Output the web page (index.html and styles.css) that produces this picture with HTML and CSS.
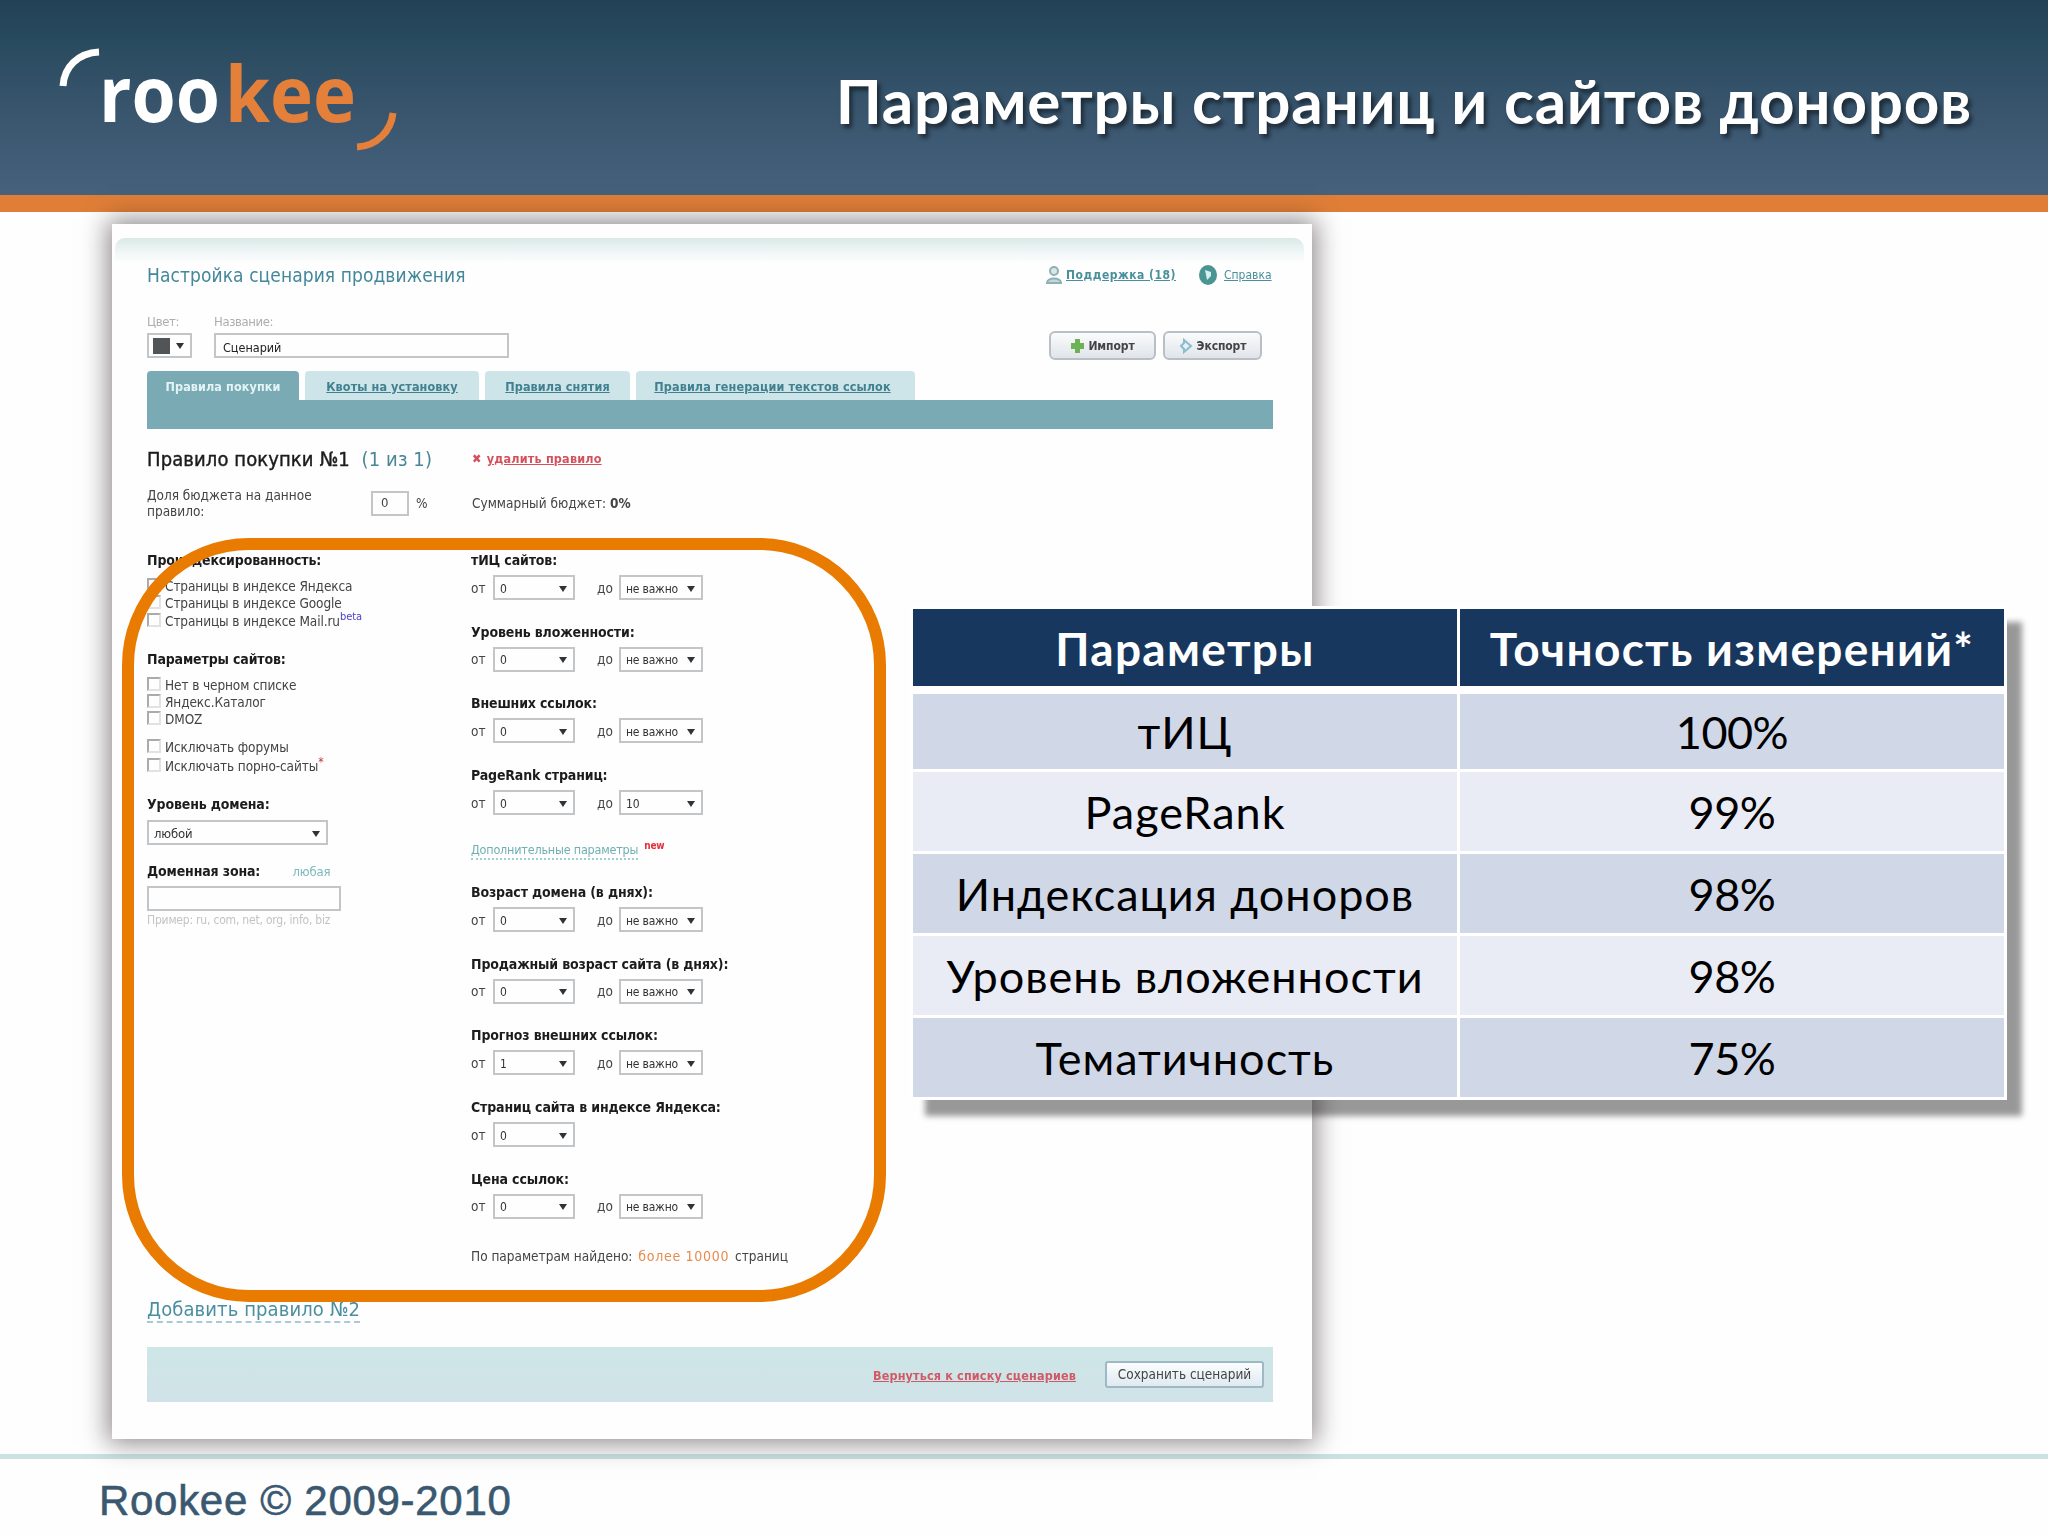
FILE: index.html
```
<!doctype html>
<html lang="ru">
  <head>
    <meta charset="UTF-8" />
    <title>Параметры страниц и сайтов доноров</title>
    <link rel="stylesheet" href="styles.css">
  </head>
  <body>
    <div class="slide">
      <header class="header">
        <svg class="logo" width="350" height="120" viewBox="0 0 350 120">
          <path d="M6 51 C7 32 21 18 42 17" fill="none" stroke="#fff" stroke-width="7" />
          <text class="logo-text" x="42" y="87" textLength="121" lengthAdjust="spacingAndGlyphs" fill="#fff">roo</text>
          <text class="logo-text" x="168" y="87" textLength="131" lengthAdjust="spacingAndGlyphs" fill="#e5803a">kee</text>
          <path d="M336 78 C334 96 320 111 300 112" fill="none" stroke="#e5803a" stroke-width="7" />
        </svg>
        <h1>Параметры страниц и сайтов доноров</h1>
      </header>

      <main class="main">
        <div class="panel">
          <div class="panel-content">
            <div class="glow"></div>
            <div class="panel-head">
              <h2>Настройка сценария продвижения</h2>
              <div class="help-links">
                <svg width="16" height="20" viewBox="0 0 16 20">
                  <circle cx="8" cy="6" r="4" fill="#d9e6e8" stroke="#8fb0b5" stroke-width="2" />
                  <path d="M1 18 C1 12 15 12 15 18 Z" fill="#c4d8da" stroke="#8fb0b5" stroke-width="2" />
                </svg>
                <a class="support">Поддержка (18)</a>
                <svg width="18" height="20" viewBox="0 0 18 20">
                  <ellipse cx="9" cy="10" rx="9" ry="10" fill="#4a9494" />
                  <path d="M6 5 L12 7 L12 11 L8 15 Z" fill="#d5eeee" />
                </svg>
                <a class="help">Справка</a>
              </div>
            </div>

            <div class="scenario">
              <div class="field field-color">
                <label>Цвет:</label>
                <div class="box color-box"><span class="swatch"></span><span class="arrow"></span></div>
              </div>
              <div class="field field-name">
                <label>Название:</label>
                <div class="box name-box">Сценарий</div>
              </div>
              <div class="btn btn-import">
                <svg width="14" height="16" viewBox="0 0 14 16">
                  <path d="M5 1 H10 V5 H14 V11 H10 V15 H5 V11 H1 V5 H5 Z" fill="#6db356" />
                </svg>
                Импорт
              </div>
              <div class="btn btn-export">
                <svg width="14" height="16" viewBox="0 0 14 16">
                  <path d="M5 2 L12 8 L5 14 V11 L2 8 L5 5 Z" fill="#e3f2f8" stroke="#8bbccb" stroke-width="2" />
                </svg>
                Экспорт
              </div>
            </div>

            <div class="tabs">
              <div class="tab tab-active">Правила покупки</div>
              <div class="tab tab-quota"><a>Квоты на установку</a></div>
              <div class="tab tab-removal"><a>Правила снятия</a></div>
              <div class="tab tab-texts"><a>Правила генерации текстов ссылок</a></div>
            </div>
            <div class="tabs-bar"></div>

            <div class="rule-head">
              <div class="rule-title">Правило покупки №1 <span>(1 из 1)</span></div>
              <div class="rule-delete"><b>✖</b><a>удалить правило</a></div>
            </div>

            <div class="budget">
              <div class="budget-share">Доля бюджета на данное правило:</div>
              <div class="box budget-box">0</div>
              <div class="percent">%</div>
              <div>Суммарный бюджет: <b>0%</b></div>
            </div>

            <div class="filters">
              <div class="col-left">
                <h3>Проиндексированность:</h3>
                <div class="checks">
                  <div class="check"><i></i>Страницы в индексе Яндекса</div>
                  <div class="check"><i></i>Страницы в индексе Google</div>
                  <div class="check check-gap"><i></i>Страницы в индексе Mail.ru<sup class="beta">beta</sup></div>
                </div>
                <h3>Параметры сайтов:</h3>
                <div class="checks checks-sites">
                  <div class="check"><i></i>Нет в черном списке</div>
                  <div class="check"><i></i>Яндекс.Каталог</div>
                  <div class="check"><i></i>DMOZ</div>
                </div>
                <div class="checks checks-exclude">
                  <div class="check"><i></i>Исключать форумы</div>
                  <div class="check"><i></i>Исключать порно-сайты<sup class="star">*</sup></div>
                </div>
                <h3>Уровень домена:</h3>
                <div class="box select select-level">любой<span class="arrow"></span></div>
                <h3 class="zone-title">Доменная зона: <a>любая</a></h3>
                <div class="box zone-box"></div>
                <div class="hint">Пример: ru, com, net, org, info, biz</div>
              </div>

              <div class="col-right">
                <div class="groups">
                  <div class="group">
                    <h3>тИЦ сайтов:</h3>
                    <div class="range">от <div class="box select">0<span class="arrow"></span></div> <span class="to">до</span> <div class="box select">не важно<span class="arrow"></span></div></div>
                  </div>
                  <div class="group">
                    <h3>Уровень вложенности:</h3>
                    <div class="range">от <div class="box select">0<span class="arrow"></span></div> <span class="to">до</span> <div class="box select">не важно<span class="arrow"></span></div></div>
                  </div>
                  <div class="group">
                    <h3>Внешних ссылок:</h3>
                    <div class="range">от <div class="box select">0<span class="arrow"></span></div> <span class="to">до</span> <div class="box select">не важно<span class="arrow"></span></div></div>
                  </div>
                  <div class="group">
                    <h3>PageRank страниц:</h3>
                    <div class="range">от <div class="box select">0<span class="arrow"></span></div> <span class="to">до</span> <div class="box select">10<span class="arrow"></span></div></div>
                  </div>
                </div>
                <div class="more"><a>Дополнительные параметры</a><sup>new</sup></div>
                <div class="groups">
                  <div class="group">
                    <h3>Возраст домена (в днях):</h3>
                    <div class="range">от <div class="box select">0<span class="arrow"></span></div> <span class="to">до</span> <div class="box select">не важно<span class="arrow"></span></div></div>
                  </div>
                  <div class="group">
                    <h3>Продажный возраст сайта (в днях):</h3>
                    <div class="range">от <div class="box select">0<span class="arrow"></span></div> <span class="to">до</span> <div class="box select">не важно<span class="arrow"></span></div></div>
                  </div>
                  <div class="group">
                    <h3>Прогноз внешних ссылок:</h3>
                    <div class="range">от <div class="box select">1<span class="arrow"></span></div> <span class="to">до</span> <div class="box select">не важно<span class="arrow"></span></div></div>
                  </div>
                  <div class="group">
                    <h3>Страниц сайта в индексе Яндекса:</h3>
                    <div class="range">от <div class="box select">0<span class="arrow"></span></div></div>
                  </div>
                  <div class="group">
                    <h3>Цена ссылок:</h3>
                    <div class="range">от <div class="box select">0<span class="arrow"></span></div> <span class="to">до</span> <div class="box select">не важно<span class="arrow"></span></div></div>
                  </div>
                </div>
                <div class="found">По параметрам найдено: <b>более 10000</b> страниц</div>
              </div>
            </div>

            <div class="add-rule"><a>Добавить правило №2</a></div>

            <div class="actions">
              <a>Вернуться к списку сценариев</a>
              <div class="btn-save">Сохранить сценарий</div>
            </div>
          </div>
        </div>

        <!-- highlight over the filters -->
        <div class="frame"></div>

        <table class="accuracy">
          <thead>
            <tr><th>Параметры</th><th>Точность измерений*</th></tr>
          </thead>
          <tbody>
            <tr><td>тИЦ</td><td class="num">100%</td></tr>
            <tr><td>PageRank</td><td class="num">99%</td></tr>
            <tr><td>Индексация доноров</td><td class="num">98%</td></tr>
            <tr><td>Уровень вложенности</td><td class="num">98%</td></tr>
            <tr><td>Тематичность</td><td class="num">75%</td></tr>
          </tbody>
        </table>
      </main>

      <footer class="footer">Rookee © 2009-2010</footer>
    </div>
  </body>
</html>
```
FILE: styles.css
```
* {
  box-sizing: border-box;
}
body {
  margin: 0;
  background: #fefefe;
  font-family: "DejaVu Sans Condensed", "DejaVu Sans", sans-serif;
}
h1,
h2,
h3 {
  margin: 0;
}
.slide {
  width: 2048px;
  height: 1536px;
  display: flex;
  flex-direction: column;
  overflow: hidden;
}

/* header */
.header {
  height: 212px;
  padding: 35px 76px 0 57px;
  display: flex;
  justify-content: space-between;
  align-items: flex-start;
  background: linear-gradient(#234156 0, #284a5e 20%, #3a566f 60%, #46617c 100%);
  border-bottom: 17px solid #e07e38;
}
.logo {
  flex: none;
}
.logo-text {
  font-family: "Open Sans", sans-serif;
  font-weight: 700;
  font-size: 77px;
}
h1 {
  padding-top: 28px;
  font-family: Lato, sans-serif;
  font-size: 62px;
  font-weight: 700;
  line-height: 74px;
  letter-spacing: 0.75px;
  color: #fff;
  white-space: nowrap;
  text-shadow: 3px 4px 4px rgba(0, 0, 0, 0.5);
}

/* screenshot panel */
.main {
  position: relative;
  height: 1242px;
  padding: 12px 0 0 112px;
}
.panel {
  width: 1200px;
  height: 1215px;
  background: #fefefe;
  box-shadow: 0 0 24px 4px rgba(30, 20, 25, 0.5);
}
.panel-content {
  height: 100%;
  padding: 14px 39px 0 35px;
  font-size: 13.5px;
  letter-spacing: 0;
  color: #444;
  filter: blur(0.6px);
}
.glow {
  height: 25px;
  margin: 0 -31px 0 -32px;
  border-radius: 10px 10px 0 0;
  background: linear-gradient(#d9e8e6, #eef5f5 50%, #fefefe);
}
.panel-head {
  height: 24px;
  display: flex;
  justify-content: space-between;
  align-items: center;
}
h2 {
  font-size: 19px;
  font-weight: 400;
  line-height: 22px;
  letter-spacing: 0.08px;
  color: #43879b;
}
.help-links {
  display: flex;
  align-items: center;
  color: #4a8f9c;
  text-decoration: underline;
}
.help-links a {
  font-size: 12px;
  white-space: nowrap;
}
.support {
  width: 112px;
  margin: 0 21px 0 4px;
  font-weight: 700;
  letter-spacing: 0.5px;
}
.help {
  width: 49px;
  margin-left: 7px;
}
.box {
  height: 25px;
  border: 2px solid #c3c6c8;
  display: flex;
  align-items: center;
  background: #fefefe;
}
.arrow {
  border: 4.5px solid transparent;
  border-top: 6px solid #333;
  border-bottom: 0;
}
.scenario {
  display: flex;
  margin-top: 28px;
}
.field label {
  display: block;
  height: 18px;
  font-size: 13px;
  line-height: 14px;
  letter-spacing: -0.4px;
  color: #adadad;
}
.field-color {
  width: 67px;
}
.color-box {
  width: 45px;
  padding-left: 4px;
}
.swatch {
  width: 17px;
  height: 16px;
  margin-right: 6px;
  background: #515557;
}
.field-name {
  margin-right: auto;
}
.name-box {
  width: 295px;
  padding: 3px 0 0 7px;
  font-size: 12.5px;
  color: #222;
}
.btn {
  height: 29px;
  margin-top: 16px;
  margin-bottom: -2px;
  display: flex;
  align-items: center;
  justify-content: center;
  gap: 4px;
  border: 2px solid #b9bfc5;
  border-radius: 6px;
  background: linear-gradient(#fafbfc, #e0e4ea);
  font-size: 12px;
  font-weight: 700;
  letter-spacing: -0.1px;
}
.btn-import {
  width: 107px;
  margin-right: 7px;
}
.btn-export {
  width: 99px;
  margin-right: 11px;
}
.tabs {
  display: flex;
  height: 29px;
  margin-top: 13px;
}
.tab {
  display: flex;
  align-items: center;
  justify-content: center;
  margin-right: 6px;
  padding-top: 2px;
  border-radius: 4px 4px 0 0;
  background: #cde4e8;
  font-size: 12.5px;
  font-weight: 700;
  letter-spacing: 0.1px;
  color: #40808f;
}
.tab a {
  text-decoration: underline;
}
.tab-active {
  width: 152px;
  background: #7aabb5;
  color: #e4f4f6;
}
.tab-quota {
  width: 174px;
}
.tab-removal {
  width: 145px;
}
.tab-texts {
  width: 279px;
  padding-right: 6px;
}
.tabs-bar {
  height: 29px;
  background: #7aabb5;
}
.rule-head {
  display: grid;
  grid-template-columns: 325px 1fr;
  height: 24px;
  margin-top: 18px;
  line-height: 24px;
}
.rule-title {
  font-size: 20px;
  color: #1c1c1c;
  letter-spacing: 0.1px;
  -webkit-text-stroke: 0.4px;
}
.rule-title span {
  margin-left: 6px;
  color: #4a8596;
  letter-spacing: 0.1px;
  -webkit-text-stroke: 0;
}
.rule-delete {
  display: flex;
  gap: 5px;
  font-size: 12.5px;
  font-weight: 700;
  letter-spacing: 0.2px;
  color: #d4515c;
}
.rule-delete a {
  text-decoration: underline;
}
.budget {
  display: grid;
  grid-template-columns: 224px 38px 63px 1fr;
  align-items: center;
  height: 32px;
  margin-top: 16px;
  line-height: 16px;
}
.budget-share {
  width: 180px;
}
.budget-box {
  padding-left: 8px;
  font-size: 13px;
}
.percent {
  padding-left: 7px;
}
.filters {
  display: grid;
  grid-template-columns: 324px 1fr;
  height: 714px;
  margin-top: 32px;
}
h3 {
  height: 18px;
  font-size: 14px;
  line-height: 18px;
  letter-spacing: -0.15px;
  color: #1c1c1c;
  white-space: nowrap;
}
.checks {
  margin: 9px 0 20px;
}
.checks-sites {
  margin-bottom: 11px;
}
.checks-exclude {
  margin-top: 0;
}
.check {
  display: flex;
  height: 17px;
  line-height: 17px;
  letter-spacing: -0.1px;
}
.check-gap {
  margin-top: 1px;
}
.checks-exclude .check + .check {
  margin-top: 2px;
}
.check i {
  width: 14px;
  height: 14px;
  margin-right: 4px;
  border: 2px solid #a9abad;
  border-right-color: #e2e2e2;
  border-bottom-color: #e2e2e2;
}
sup {
  line-height: 8px;
  vertical-align: 0;
}
.beta {
  font-size: 11px;
  color: #4b41c8;
}
.star {
  font-size: 12px;
  color: #c33;
}
.select {
  justify-content: space-between;
  padding: 2px 6px 0 5px;
  font-size: 12px;
  letter-spacing: -0.2px;
  color: #333;
}
.select-level {
  width: 181px;
  margin: 7px 0 17px;
  font-size: 13px;
}
.zone-title a {
  margin-left: 28px;
  font-size: 13px;
  font-weight: 400;
  color: #7fb9b9;
}
.zone-box {
  width: 194px;
  margin: 6px 0 2px;
}
.hint {
  font-size: 12px;
  line-height: 14px;
  letter-spacing: -0.2px;
  color: #c3c3c3;
  white-space: nowrap;
}
.groups {
  display: grid;
  grid-auto-rows: 49px;
  row-gap: 22.7px;
}
.range {
  display: grid;
  grid-template-columns: 22px 82px 22px 22px 84px;
  align-items: center;
  height: 25px;
  margin-top: 6px;
}
.to {
  grid-column: 4;
}
.more {
  display: flex;
  height: 18px;
  margin: 27px 0 23px;
  font-size: 12.5px;
  line-height: 16px;
  letter-spacing: -0.2px;
  color: #6fb0b3;
}
.more a {
  border-bottom: 2px dotted #9fcfd0;
}
.more sup {
  margin-left: 6px;
  font-size: 10px;
  font-weight: 700;
  color: #e0303c;
}
.found {
  margin-top: 28px;
  line-height: 18px;
  letter-spacing: 0;
}
.found b {
  margin: 0 2px;
  font-weight: 400;
  font-size: 14px;
  letter-spacing: 0.7px;
  color: #e88b4c;
}
.add-rule {
  height: 26px;
  margin-top: 32px;
  font-size: 20px;
  line-height: 24px;
  letter-spacing: 0.1px;
  color: #4a8fa0;
}
.add-rule a {
  display: inline-block;
  height: 26px;
  border-bottom: 2px dashed #a8cbd3;
}
.actions {
  display: flex;
  justify-content: flex-end;
  align-items: center;
  gap: 29px;
  height: 55px;
  margin-top: 24px;
  padding-right: 9px;
  background: linear-gradient(#cde6e6, #d0e2e8);
}
.actions a {
  padding-top: 2px;
  font-size: 12.5px;
  font-weight: 700;
  letter-spacing: 0.15px;
  color: #cf5a67;
  text-decoration: underline;
}
.btn-save {
  width: 159px;
  height: 27px;
  border: 2px solid #9fb9c4;
  border-radius: 3px;
  background: linear-gradient(#fafdfe, #dfeaf0);
  font-size: 13.5px;
  line-height: 22px;
  text-align: center;
}

.frame {
  position: absolute;
  left: 122px;
  top: 326px;
  width: 764px;
  height: 764px;
  border: 12.5px solid #e87b00;
  border-radius: 127px;
}

/* accuracy table */
.accuracy {
  position: absolute;
  left: 910px;
  top: 394px;
  width: 1097px;
  border-collapse: separate;
  border-spacing: 3px;
  table-layout: fixed;
  background: #fff;
  box-shadow: 15px 16px 6px rgba(0, 0, 0, 0.4);
  font-family: Lato, sans-serif;
  font-size: 45px;
  letter-spacing: 1px;
  color: #000;
}
.accuracy th {
  height: 77px;
  padding: 3px 0 0;
  background: #17375e;
  font-size: 46px;
  line-height: 60px;
  letter-spacing: 1.3px;
  color: #fff;
}
.accuracy td {
  height: 79px;
  padding: 0;
  background: #d0d8e8;
  line-height: 60px;
  text-align: center;
}
.accuracy tr:nth-child(even) td {
  background: #e9ebf5;
}
.accuracy tbody tr:first-child td {
  height: 80px;
  border-top: 5px solid #fff;
}
.accuracy .num {
  letter-spacing: -0.5px;
}

.footer {
  height: 82px;
  padding: 18px 0 0 99px;
  border-top: 5px solid #cbe2e3;
  font-family: "Liberation Sans", Arial, sans-serif;
  font-size: 42px;
  line-height: 48px;
  letter-spacing: 0.7px;
  color: #3a5870;
  -webkit-text-stroke: 0.6px;
}
```
